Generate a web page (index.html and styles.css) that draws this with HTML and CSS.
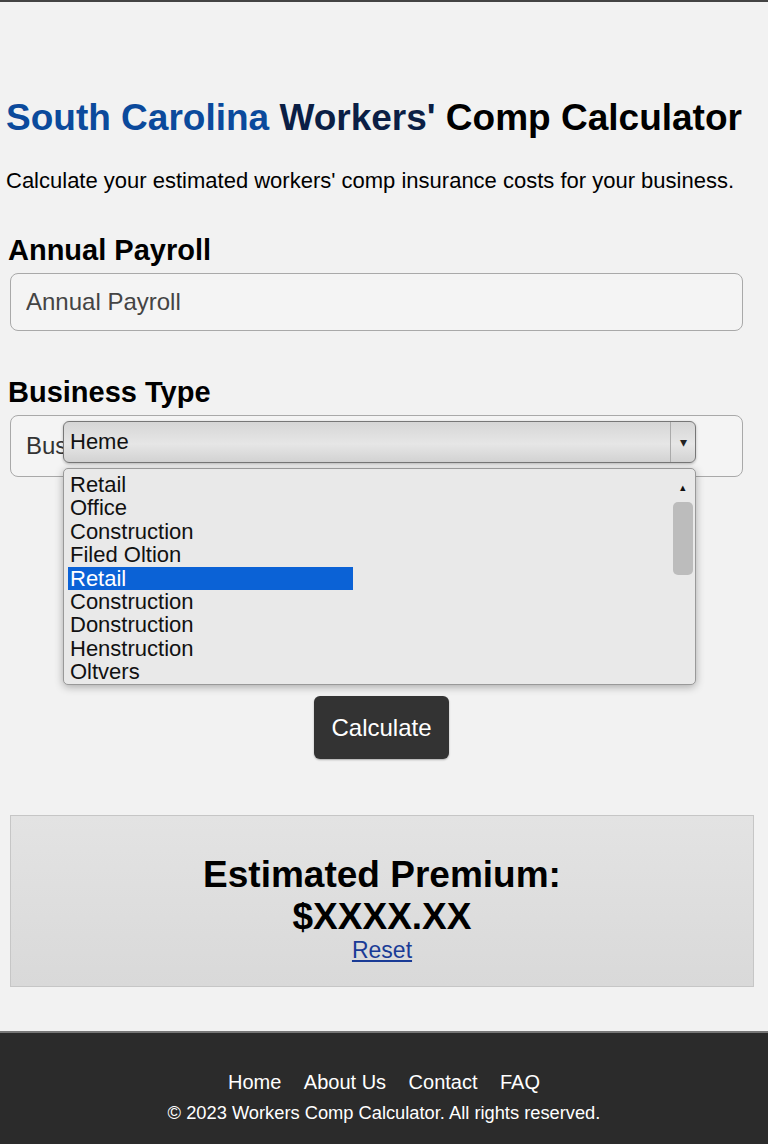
FILE: index.html
```html
<!DOCTYPE html>
<html lang="en">
<head>
    <meta charset="UTF-8">
    <meta name="viewport" content="width=device-width, initial-scale=1.0">
    <title>South Carolina Workers' Comp Calculator</title>
    <link rel="stylesheet" href="styles.css">
</head>
<body>
    <div class="page">
        <h1 class="title"><span class="state">South Carolina</span> <span class="w">Workers'</span> Comp Calculator</h1>
        <p class="intro">Calculate your estimated workers' comp insurance costs for your business.</p>

        <div class="form-group">
            <label for="payroll">Annual Payroll</label>
            <input type="text" id="payroll" class="field" placeholder="Annual Payroll">
        </div>

        <div class="form-group">
            <label>Business Type</label>
            <div class="select-wrap">
                <div class="field">Business Type</div>
                <!-- open dropdown menu -->
                <div class="dropdown">
                    <div class="dropdown-head">
                        <span>Heme</span>
                        <span class="arrow">&#9662;</span>
                    </div>
                    <div class="listbox">
                        <ul>
                            <li>Retail</li>
                            <li>Office</li>
                            <li>Construction</li>
                            <li>Filed Oltion</li>
                            <li class="selected">Retail</li>
                            <li>Construction</li>
                            <li>Donstruction</li>
                            <li>Henstruction</li>
                            <li>Oltvers</li>
                        </ul>
                        <div class="scrollbar">
                            <span class="up">&#9652;</span>
                            <span class="thumb"></span>
                        </div>
                    </div>
                </div>
            </div>
        </div>

        <div class="actions">
            <button class="btn">Calculate</button>
        </div>

        <div class="result">
            <h2>Estimated Premium:<br>$XXXX.XX</h2>
            <a href="#">Reset</a>
        </div>
    </div>

    <footer class="footer">
        <nav>
            <a href="#">Home</a>
            <a href="#">About Us</a>
            <a href="#">Contact</a>
            <a href="#">FAQ</a>
        </nav>
        <p>&copy; 2023 Workers Comp Calculator. All rights reserved.</p>
    </footer>
</body>
</html>
```

FILE: styles.css
```css
body {
    margin: 0;
    font-family: "Liberation Sans", Arial, sans-serif;
    background-color: #f2f2f2;
    color: #111;
    border-top: 2px solid #444;
}
.page {
    padding: 94px 6px 44px;
}
.title {
    margin: 0;
    font-size: 37px;
    line-height: 44px;
    color: #000;
}
.title .state {
    color: #0b4a9c;
}
.title .w {
    color: #0b1f45;
}
.intro {
    margin: 28px 0 0;
    font-size: 22px;
    line-height: 26px;
    color: #000;
}
.form-group {
    margin-top: 40px;
    position: relative;
}
.form-group + .form-group {
    margin-top: 45px;
}
label {
    display: block;
    font-weight: bold;
    font-size: 29px;
    line-height: 32px;
    margin: 0 0 7px 2px;
    color: #000;
}
.field {
    display: block;
    box-sizing: border-box;
    width: 733px;
    height: 58px;
    margin-left: 4px;
    padding: 0 15px;
    border: 1px solid #a9a9a9;
    border-radius: 8px;
    background-color: #f4f4f4;
    font-family: inherit;
    font-size: 24px;
    line-height: 56px;
    color: #333;
}
.field::placeholder {
    color: #444;
}
.select-wrap {
    position: relative;
}
.select-wrap .field {
    height: 62px;
    line-height: 60px;
}
.dropdown {
    position: absolute;
    top: 6px;
    left: 57px;
    width: 633px;
}
.dropdown-head {
    display: flex;
    height: 42px;
    box-sizing: border-box;
    border: 1px solid #777;
    border-radius: 6px;
    background: linear-gradient(#d6d6d6, #e6e6e6 55%, #d2d2d2);
    box-shadow: 0 1px 3px rgba(0,0,0,0.25);
    font-size: 22px;
    line-height: 40px;
    color: #111;
}
.dropdown-head span:first-child {
    flex: 1;
    padding-left: 6px;
}
.dropdown-head .arrow {
    width: 24px;
    border-left: 1px solid #aaa;
    text-align: center;
    font-size: 14px;
    color: #222;
}
.listbox {
    display: flex;
    margin-top: 5px;
    height: 217px;
    box-sizing: border-box;
    border: 1px solid #999;
    border-radius: 5px;
    background-color: #e9e9e9;
    box-shadow: 0 2px 8px rgba(0,0,0,0.3);
    overflow: hidden;
}
.listbox ul {
    flex: 1;
    list-style: none;
    margin: 0;
    padding: 4px 0 0 4px;
}
.listbox li {
    width: 283px;
    padding-left: 2px;
    font-size: 22px;
    line-height: 23.4px;
    color: #111;
}
.listbox li.selected {
    background-color: #0b62d6;
    color: #fff;
}
.scrollbar {
    width: 24px;
    display: flex;
    flex-direction: column;
    align-items: center;
}
.scrollbar .up {
    font-size: 11px;
    line-height: 12px;
    margin-top: 12px;
    color: #111;
}
.scrollbar .thumb {
    width: 20px;
    height: 73px;
    margin-top: 9px;
    border-radius: 5px;
    background-color: #bcbcbc;
}
.actions {
    padding-top: 219px;
    text-align: center;
}
.btn {
    width: 135px;
    height: 63px;
    margin-left: -5px;
    border: none;
    border-radius: 6px;
    background-color: #333;
    color: #fff;
    font-family: inherit;
    font-size: 24px;
    box-shadow: 0 1px 2px rgba(0,0,0,0.3);
    cursor: pointer;
}
.result {
    margin: 56px 8px 0 4px;
    padding: 38px 0 24px;
    border: 1px solid #c6c6c6;
    background: linear-gradient(#e3e3e3, #d9d9d9);
    text-align: center;
}
.result h2 {
    margin: 0;
    font-size: 37px;
    line-height: 42px;
    color: #000;
}
.result a {
    display: block;
    font-size: 23px;
    line-height: 24px;
    color: #1a3b96;
}
.footer {
    border-top: 2px solid #777;
    background-color: #2b2b2b;
    color: #fff;
    text-align: center;
    padding: 37px 0 22px;
}
.footer nav {
    line-height: 24px;
}
.footer nav a {
    color: #fff;
    text-decoration: none;
    font-size: 20px;
    margin: 0 9px;
}
.footer p {
    margin: 6px 0 0;
    font-size: 18.3px;
    line-height: 22px;
}
```
